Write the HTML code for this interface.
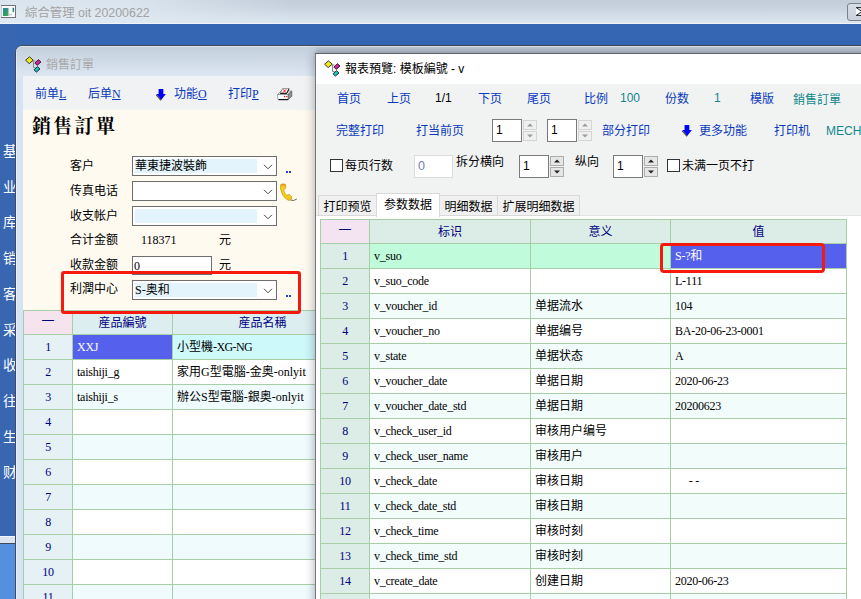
<!DOCTYPE html>
<html lang="zh">
<head>
<meta charset="utf-8">
<title>綜合管理 oit 20200622</title>
<style>
*{box-sizing:border-box;margin:0;padding:0}
html,body{width:861px;height:599px;overflow:hidden;background:#3667b3}
body{position:relative;font-family:"Liberation Sans","Noto Sans CJK SC",sans-serif;font-size:12px;color:#000}
.a{position:absolute;white-space:nowrap;line-height:1}
.sf{font-family:"Liberation Serif","Noto Sans CJK SC",serif}
.blue{color:#0a38bd}
.teal{color:#11868c}
.navy{color:#00007e}
#mt{left:0;top:0;width:861px;height:24px;background:linear-gradient(180deg,#dae4ee 0%,#dde7f0 50%,#e0e9f2 100%)}
#mtr{left:130px;top:0;width:731px;height:24px;background:linear-gradient(180deg,#c3cdda 0%,#c9d3df 35%,#d6e1ec 75%,#dbe6f0 100%);-webkit-mask-image:linear-gradient(90deg,transparent,#000 22%);mask-image:linear-gradient(90deg,transparent,#000 22%)}
#band{left:0;top:24px;width:861px;height:22px;background:#3566b3}
#side{left:0;top:24px;width:16px;height:575px;background:#3866b1}
#side2{left:0;top:536px;width:15px;height:8px;background:#d9e4f0;border-top:1px solid #f2f6fa;border-bottom:1px solid #3f4a5a}
#side3{left:0;top:544px;width:15px;height:55px;background:#5590e0}
.sc{left:3px;color:#fff;font-size:14px}
#bw{left:15px;top:45px;width:420px;height:560px;background:#d6e3f3;border:1px solid #414b5b;border-radius:7px 0 0 0}
#bwt{left:16px;top:46px;width:845px;height:31px;background:linear-gradient(180deg,#c4cfdc 0%,#dce7f3 100%);border-radius:6px 0 0 0}
#btb{left:23px;top:76px;width:293px;height:34px;background:#f0f2f3}
#bct{left:23px;top:110px;width:293px;height:489px;background:#fffaf0}
.lbl{left:70px;font-size:12px}
.combo{left:132px;width:145px;height:20px;background:#fff;border:1px solid #6e6e6e}
.combo .fill{position:absolute;left:2px;top:2px;width:122px;height:14px;background:#e4f4fc}
.combo .tx{position:absolute;left:2px;top:3px;font-size:12px;line-height:1;white-space:nowrap}
.combo svg{position:absolute;right:3px;top:7px}
.cell{position:absolute;border-right:1px solid #a6cfa6;border-bottom:1px solid #a6cfa6;font-size:12px;line-height:1;white-space:nowrap;overflow:hidden}
.cell.sf{letter-spacing:-0.25px}
.up{letter-spacing:-0.6px}
.num{text-align:center;color:#00007e;background:#e5f1f5;letter-spacing:0}
.hd{text-align:center;color:#00007e;background:#ddeef1}
#fwb{left:311px;top:46px;width:550px;height:7px;background:linear-gradient(180deg,rgba(70,80,95,.08),rgba(70,80,95,.32))}
#fwl{left:315px;top:53px;width:1px;height:546px;background:#73777d}
#fwline{left:316px;top:45px;width:545px;height:1px;background:#3e4756}
#fwt{left:316px;top:54px;width:545px;height:30px;background:#fff}
#ftb{left:316px;top:84px;width:545px;height:132px;background:#f1f3f3}
#fgrid{left:316px;top:216px;width:545px;height:383px;background:#fff}
.spin{height:23px;width:30px;background:#fff;border:1px solid #7a7a7a;font-size:12px}
.spin span{position:absolute;left:3px;top:4px;line-height:1}
.sb{width:14px;height:10px;background:#f0f0f0;border:1px solid #d4d4d4}
.sbd{border-color:#adadad;background:#e6e6e6}
.cb{width:13px;height:13px;background:#fff;border:1px solid #333}
.tab{height:21px;border:1px solid #d9d9d9;background:#f0f0f0;font-size:12px;text-align:center}
</style>
</head>
<body>
<div class="a" id="mt"></div><div class="a" id="mtr"></div><div class="a" id="band"></div>
<div class="a" id="side"></div><div class="a" id="side2"></div><div class="a" id="side3"></div>
<svg class="a" style="left:1px;top:5px" width="15" height="13" viewBox="0 0 15 13">
<defs><linearGradient id="ig" x1="0" y1="0" x2="1" y2="1"><stop offset="0" stop-color="#2f7fb0"/><stop offset=".5" stop-color="#2f9a6a"/><stop offset="1" stop-color="#46a85a"/></linearGradient>
<linearGradient id="ig2" x1="0" y1="0" x2="0" y2="1"><stop offset="0" stop-color="#1c55b8"/><stop offset="1" stop-color="#3aa45a"/></linearGradient></defs>
<rect x="0.5" y="0.5" width="14" height="12" fill="#fbfbfb" stroke="#6e737b"/>
<path d="M0.5 12 V1" stroke="#c9ccd2"/>
<rect x="2" y="3" width="5.5" height="8" fill="url(#ig)"/>
<rect x="11.6" y="2.8" width="1.5" height="4.3" fill="url(#ig2)"/>
<rect x="8" y="8.8" width="2.7" height="1.6" fill="#c4c6c8"/>
</svg>
<div class="a" style="left:0;top:23px;width:861px;height:1px;background:#f0f4f8"></div>
<div class="a" style="left:25px;top:7px;font-size:12.4px;color:#a2a2a2">綜合管理 oit 20200622</div>
<div class="a" style="left:847px;top:3px;width:20px;height:18px;border:1px solid #7a818b;border-radius:3px;background:linear-gradient(180deg,#d6dde6,#c9d1dc)"></div>
<svg class="a" style="left:855px;top:7px" width="8" height="9" viewBox="0 0 8 9"><path d="M1 0.5 L7 4.5 L1 8.5" fill="#fff" stroke="#333" stroke-width="1"/><path d="M1 0.5 L8 0.5 M1 8.5 L8 8.5" stroke="#333"/></svg>
<div class="a sc" style="top:144.0px">基</div>
<div class="a sc" style="top:179.7px">业</div>
<div class="a sc" style="top:215.4px">库</div>
<div class="a sc" style="top:251.1px">销</div>
<div class="a sc" style="top:286.8px">客</div>
<div class="a sc" style="top:322.5px">采</div>
<div class="a sc" style="top:358.2px">收</div>
<div class="a sc" style="top:393.9px">往</div>
<div class="a sc" style="top:429.6px">生</div>
<div class="a sc" style="top:465.3px">财</div>
<div class="a" id="bw"></div><div class="a" id="bwt"></div><div class="a" id="btb"></div><div class="a" id="bct"></div>
<div class="a" style="left:16px;top:52px;width:1px;height:547px;background:rgba(255,255,255,.5)"></div>
<svg class="a" style="left:25px;top:56px" width="17" height="17" viewBox="0 0 17 17">
<path d="M7.5 5 H10.5 M8.5 5 V11.5 H10.5" fill="none" stroke="#8a8a8a" stroke-width="1"/>
<path d="M4.5 0.8 L8.2 4.2 L4.2 7.6 L0.6 4.2 Z" fill="#f2ea17" stroke="#222" stroke-width="0.9"/>
<path d="M13.5 3.6 L16 6 L12.2 9.4 L9.8 7 Z" fill="#d81b9a" stroke="#222" stroke-width="0.9"/>
<path d="M12.6 10.6 L15 13 L11.4 16.2 L9 13.8 Z" fill="#19c2c2" stroke="#222" stroke-width="0.9"/>
</svg>
<div class="a" style="left:46px;top:59px;font-size:12px;color:#a8a8a8">銷售訂單</div>
<div class="a blue" style="left:35px;top:88px">前单<u class="sf">L</u></div>
<div class="a blue" style="left:88px;top:88px">后单<u class="sf">N</u></div>
<svg class="a" style="left:156px;top:89px" width="11" height="12" viewBox="0 0 11 12"><path d="M0.2 5.8 L5 11.3" stroke="#5a5526" stroke-width="1.2" fill="none"/><path d="M2.6 0 H7.3 V5 H9.8 L5.2 11 L0.4 5 H2.6 Z" fill="#0000fe"/></svg>
<div class="a blue" style="left:174px;top:88px">功能<u class="sf">O</u></div>
<div class="a blue" style="left:228px;top:88px">打印<u class="sf">P</u></div>
<svg class="a" style="left:277px;top:88px" width="16" height="13" viewBox="0 0 16 13">
<path d="M0.6 6.5 L4 3 L14.6 3 L11 6.5 Z" fill="#f1f1f1" stroke="#777" stroke-width=".7"/>
<path d="M11 6.5 L14.8 3.2 L14.8 8.3 L11 11.8 Z" fill="#8f8f96" stroke="#444" stroke-width=".6"/>
<path d="M0.6 6.5 H11 V11.5 H1.6 Q0.6 11.5 0.6 10.5 Z" fill="#fbfbfb" stroke="#777" stroke-width=".6"/>
<path d="M1.5 11.6 H11" stroke="#111" stroke-width="1.2"/>
<path d="M5.5 0.6 H12 L9.8 5.2 H3.2 Z" fill="#fff" stroke="#555" stroke-width=".6"/>
<path d="M3.2 5.4 H9.8 L12 0.8" stroke="#111" fill="none" stroke-width="1"/>
<path d="M6 1.2 L9 4.6 M9.5 1.2 L5.5 4.8" stroke="#e11" stroke-width=".9"/>
<rect x="7" y="8" width="1.2" height="1.2" fill="#e11"/><rect x="9.2" y="8" width="1.2" height="1.2" fill="#e11"/>
</svg>
<div class="a" style="left:32px;top:117px;font-family:'Liberation Serif','Noto Serif CJK SC',serif;font-weight:bold;font-size:19px;letter-spacing:2.3px">銷售訂單</div>
<div class="a lbl" style="top:160px">客户</div>
<div class="a lbl" style="top:185px">传真电话</div>
<div class="a lbl" style="top:210px">收支帐户</div>
<div class="a lbl" style="top:234px">合计金额</div>
<div class="a lbl" style="top:259px">收款金额</div>
<div class="a lbl" style="top:283px">利潤中心</div>
<div class="a combo" style="top:156px"><div class="fill"></div><div class="tx">華東捷波裝飾</div><svg width="10" height="6" viewBox="0 0 10 6"><path d="M1 0.8 L5 4.8 L9 0.8" fill="none" stroke="#4a4a4a" stroke-width="1"/></svg></div>
<div class="a combo" style="top:181px"><svg width="10" height="6" viewBox="0 0 10 6"><path d="M1 0.8 L5 4.8 L9 0.8" fill="none" stroke="#4a4a4a" stroke-width="1"/></svg></div>
<div class="a combo" style="top:206px"><div class="fill"></div><svg width="10" height="6" viewBox="0 0 10 6"><path d="M1 0.8 L5 4.8 L9 0.8" fill="none" stroke="#4a4a4a" stroke-width="1"/></svg></div>
<div class="a sf" style="left:141px;top:234px">118371</div>
<div class="a" style="left:219px;top:234px">元</div>
<div class="a" style="left:132px;top:256px;width:80px;height:19px;background:#fff;border:1px solid #6e6e6e"></div>
<div class="a sf" style="left:134px;top:260px">0</div>
<div class="a" style="left:219px;top:259px">元</div>
<div class="a combo" style="top:280px"><div class="fill"></div><div class="tx"><span class="sf">S-</span>奥和</div><svg width="10" height="6" viewBox="0 0 10 6"><path d="M1 0.8 L5 4.8 L9 0.8" fill="none" stroke="#4a4a4a" stroke-width="1"/></svg></div>
<div class="a" style="left:286px;top:171px;width:2px;height:2px;background:#2a3fd8"></div><div class="a" style="left:289px;top:171px;width:2px;height:2px;background:#2a3fd8"></div>
<div class="a" style="left:286px;top:295px;width:2px;height:2px;background:#2a3fd8"></div><div class="a" style="left:289px;top:295px;width:2px;height:2px;background:#2a3fd8"></div>
<svg class="a" style="left:279px;top:183px" width="20" height="20" viewBox="0 0 20 20">
<defs><linearGradient id="pg" x1="0" y1="0" x2="0" y2="1"><stop offset="0" stop-color="#f59a1a"/><stop offset=".25" stop-color="#f8d61c"/><stop offset="1" stop-color="#f3c614"/></linearGradient></defs>
<path d="M11.5 17 Q14.5 18.6 17.8 16" fill="none" stroke="#555" stroke-width="0.9"/>
<path d="M1.5 2.5 Q1.5 1 3 1 L5.5 1 Q7 1.2 6.8 3 L6.5 5.5 Q5 6 4.5 7 Q5.5 10.5 8 12.5 Q9 11.5 10.5 11.5 L12.5 13.5 Q13.2 15 12 16.5 Q10.5 18 8.5 17 Q3 13.5 1.5 6 Z" fill="url(#pg)" stroke="#b88a10" stroke-width="0.6"/>
</svg>
<div class="a" style="left:23px;top:310px;width:293px;height:1px;background:#a6cfa6"></div>
<div class="a" style="left:23px;top:310px;width:1px;height:289px;background:#a6cfa6"></div>
<div class="cell hd" style="left:24px;top:311px;width:49px;height:24px;padding-top:6px;background:#f5e4ee;"><span style="position:relative;top:-3px">—</span></div>
<div class="cell hd" style="left:73px;top:311px;width:100px;height:24px;padding-top:6px;">産品編號</div>
<div class="cell hd" style="left:173px;top:311px;width:180px;height:24px;padding-top:6px;">産品名稱</div>
<div class="cell num sf" style="left:24px;top:335px;width:49px;height:25px;padding-top:6px;">1</div>
<div class="cell sf" style="left:73px;top:335px;width:100px;height:25px;padding-top:6px;padding-left:4px;background:#5560ec;color:#fff;">XXJ</div>
<div class="cell " style="left:173px;top:335px;width:180px;height:25px;padding-top:6px;padding-left:4px;background:#cdf9fb;">小型機<span class="sf up">-XG-NG</span></div>
<div class="cell num sf" style="left:24px;top:360px;width:49px;height:25px;padding-top:6px;">2</div>
<div class="cell sf" style="left:73px;top:360px;width:100px;height:25px;padding-top:6px;padding-left:4px;background:#fff;">taishiji_g</div>
<div class="cell " style="left:173px;top:360px;width:180px;height:25px;padding-top:6px;padding-left:4px;background:#fff;">家用<span class="sf">G</span>型電腦<span class="sf">-</span>金奥<span class="sf">-onlyit</span></div>
<div class="cell num sf" style="left:24px;top:385px;width:49px;height:25px;padding-top:6px;">3</div>
<div class="cell sf" style="left:73px;top:385px;width:100px;height:25px;padding-top:6px;padding-left:4px;background:#f0fbfd;">taishiji_s</div>
<div class="cell " style="left:173px;top:385px;width:180px;height:25px;padding-top:6px;padding-left:4px;background:#f0fbfd;">辦公<span class="sf">S</span>型電腦<span class="sf">-</span>銀奥<span class="sf">-onlyit</span></div>
<div class="cell num sf" style="left:24px;top:410px;width:49px;height:25px;padding-top:6px;">4</div>
<div class="cell sf" style="left:73px;top:410px;width:100px;height:25px;padding-top:6px;padding-left:4px;background:#fff;"></div>
<div class="cell " style="left:173px;top:410px;width:180px;height:25px;padding-top:6px;padding-left:4px;background:#fff;"></div>
<div class="cell num sf" style="left:24px;top:435px;width:49px;height:25px;padding-top:6px;">5</div>
<div class="cell sf" style="left:73px;top:435px;width:100px;height:25px;padding-top:6px;padding-left:4px;background:#f0fbfd;"></div>
<div class="cell " style="left:173px;top:435px;width:180px;height:25px;padding-top:6px;padding-left:4px;background:#f0fbfd;"></div>
<div class="cell num sf" style="left:24px;top:460px;width:49px;height:25px;padding-top:6px;">6</div>
<div class="cell sf" style="left:73px;top:460px;width:100px;height:25px;padding-top:6px;padding-left:4px;background:#fff;"></div>
<div class="cell " style="left:173px;top:460px;width:180px;height:25px;padding-top:6px;padding-left:4px;background:#fff;"></div>
<div class="cell num sf" style="left:24px;top:485px;width:49px;height:25px;padding-top:6px;">7</div>
<div class="cell sf" style="left:73px;top:485px;width:100px;height:25px;padding-top:6px;padding-left:4px;background:#f0fbfd;"></div>
<div class="cell " style="left:173px;top:485px;width:180px;height:25px;padding-top:6px;padding-left:4px;background:#f0fbfd;"></div>
<div class="cell num sf" style="left:24px;top:510px;width:49px;height:25px;padding-top:6px;">8</div>
<div class="cell sf" style="left:73px;top:510px;width:100px;height:25px;padding-top:6px;padding-left:4px;background:#fff;"></div>
<div class="cell " style="left:173px;top:510px;width:180px;height:25px;padding-top:6px;padding-left:4px;background:#fff;"></div>
<div class="cell num sf" style="left:24px;top:535px;width:49px;height:25px;padding-top:6px;">9</div>
<div class="cell sf" style="left:73px;top:535px;width:100px;height:25px;padding-top:6px;padding-left:4px;background:#f0fbfd;"></div>
<div class="cell " style="left:173px;top:535px;width:180px;height:25px;padding-top:6px;padding-left:4px;background:#f0fbfd;"></div>
<div class="cell num sf" style="left:24px;top:560px;width:49px;height:25px;padding-top:6px;">10</div>
<div class="cell sf" style="left:73px;top:560px;width:100px;height:25px;padding-top:6px;padding-left:4px;background:#fff;"></div>
<div class="cell " style="left:173px;top:560px;width:180px;height:25px;padding-top:6px;padding-left:4px;background:#fff;"></div>
<div class="cell num sf" style="left:24px;top:585px;width:49px;height:25px;padding-top:6px;">11</div>
<div class="cell sf" style="left:73px;top:585px;width:100px;height:25px;padding-top:6px;padding-left:4px;background:#f0fbfd;"></div>
<div class="cell " style="left:173px;top:585px;width:180px;height:25px;padding-top:6px;padding-left:4px;background:#f0fbfd;"></div>
<div class="a" style="left:61px;top:271px;width:240px;height:43px;border:3px solid #f5190f;border-radius:3px"></div>
<div class="a" id="fwline"></div>
<div class="a" style="left:22px;top:46px;width:839px;height:1px;background:rgba(255,255,255,.45)"></div>
<div class="a" style="left:315px;top:53px;width:560px;height:560px;box-shadow:0 0 9px 1px rgba(40,45,55,.34)"></div>
<div class="a" style="left:316px;top:47px;width:545px;height:6px;background:linear-gradient(180deg,rgba(50,60,75,.02),rgba(50,60,75,.12))"></div>
<div class="a" id="fwt"></div><div class="a" id="ftb"></div><div class="a" id="fgrid"></div><div class="a" id="fwl"></div>
<div class="a" style="left:315px;top:53px;width:546px;height:1px;background:#5a626e"></div>
<div class="a" style="left:316px;top:215px;width:545px;height:1px;background:#e2e2e2"></div>
<svg class="a" style="left:324px;top:60px" width="17" height="17" viewBox="0 0 17 17">
<path d="M7.5 5 H10.5 M8.5 5 V11.5 H10.5" fill="none" stroke="#8a8a8a" stroke-width="1"/>
<path d="M4.5 0.8 L8.2 4.2 L4.2 7.6 L0.6 4.2 Z" fill="#f2ea17" stroke="#222" stroke-width="0.9"/>
<path d="M13.5 3.6 L16 6 L12.2 9.4 L9.8 7 Z" fill="#d81b9a" stroke="#222" stroke-width="0.9"/>
<path d="M12.6 10.6 L15 13 L11.4 16.2 L9 13.8 Z" fill="#19c2c2" stroke="#222" stroke-width="0.9"/>
</svg>
<div class="a" style="left:345px;top:63px;font-size:12px;color:#000">報表預覽: 模板編號 - v</div>
<div class="a blue" style="left:337px;top:93px">首页</div>
<div class="a blue" style="left:387px;top:93px">上页</div>
<div class="a " style="left:435px;top:92px">1/1</div>
<div class="a blue" style="left:478px;top:93px">下页</div>
<div class="a blue" style="left:527px;top:93px">尾页</div>
<div class="a blue" style="left:584px;top:93px">比例</div>
<div class="a teal" style="left:620px;top:92px">100</div>
<div class="a blue" style="left:665px;top:93px">份数</div>
<div class="a teal" style="left:714px;top:92px">1</div>
<div class="a blue" style="left:750px;top:93px">模版</div>
<div class="a teal" style="left:793px;top:94px">銷售訂單</div>
<div class="a blue" style="left:336px;top:125px">完整打印</div>
<div class="a blue" style="left:416px;top:125px">打当前页</div>
<div class="a blue" style="left:602px;top:125px">部分打印</div>
<div class="a blue" style="left:699px;top:125px">更多功能</div>
<div class="a blue" style="left:774px;top:125px">打印机</div>
<div class="a teal" style="left:826px;top:125px">MECH</div>
<svg class="a" style="left:682px;top:125px" width="11" height="12" viewBox="0 0 11 12"><path d="M0.2 5.8 L5 11.3" stroke="#5a5526" stroke-width="1.2" fill="none"/><path d="M2.6 0 H7.3 V5 H9.8 L5.2 11 L0.4 5 H2.6 Z" fill="#0000fe"/></svg>
<div class="a spin" style="left:492px;top:119px"><span>1</span></div><div class="a sb" style="left:523px;top:120px"><svg width="12" height="8" viewBox="0 0 12 8" style="display:block"><path d="M3 5.5 L6 2.5 L9 5.5 Z" fill="#9a9a9a"/></svg></div><div class="a sb" style="left:523px;top:131px"><svg width="12" height="8" viewBox="0 0 12 8" style="display:block"><path d="M3 2.5 L6 5.5 L9 2.5 Z" fill="#9a9a9a"/></svg></div>
<div class="a spin" style="left:547px;top:119px"><span>1</span></div><div class="a sb" style="left:578px;top:120px"><svg width="12" height="8" viewBox="0 0 12 8" style="display:block"><path d="M3 5.5 L6 2.5 L9 5.5 Z" fill="#9a9a9a"/></svg></div><div class="a sb" style="left:578px;top:131px"><svg width="12" height="8" viewBox="0 0 12 8" style="display:block"><path d="M3 2.5 L6 5.5 L9 2.5 Z" fill="#9a9a9a"/></svg></div>
<div class="a cb" style="left:330px;top:159px"></div>
<div class="a" style="left:345px;top:160px">每页行数</div>
<div class="a" style="left:414px;top:155px;width:39px;height:23px;background:#fff;border:1px solid #dcdcdc"></div>
<div class="a" style="left:418px;top:160px;font-size:12.5px;color:#6b7fb3">0</div>
<div class="a" style="left:456px;top:156px">拆分横向</div>
<div class="a spin" style="left:519px;top:155px"><span>1</span></div><div class="a sb sbd" style="left:550px;top:156px"><svg width="12" height="8" viewBox="0 0 12 8" style="display:block"><path d="M3 5.5 L6 2.5 L9 5.5 Z" fill="#222"/></svg></div><div class="a sb sbd" style="left:550px;top:167px"><svg width="12" height="8" viewBox="0 0 12 8" style="display:block"><path d="M3 2.5 L6 5.5 L9 2.5 Z" fill="#222"/></svg></div>
<div class="a" style="left:575px;top:156px">纵向</div>
<div class="a spin" style="left:613px;top:155px"><span>1</span></div><div class="a sb sbd" style="left:644px;top:156px"><svg width="12" height="8" viewBox="0 0 12 8" style="display:block"><path d="M3 5.5 L6 2.5 L9 5.5 Z" fill="#222"/></svg></div><div class="a sb sbd" style="left:644px;top:167px"><svg width="12" height="8" viewBox="0 0 12 8" style="display:block"><path d="M3 2.5 L6 5.5 L9 2.5 Z" fill="#222"/></svg></div>
<div class="a cb" style="left:667px;top:159px"></div>
<div class="a" style="left:682px;top:160px">未满一页不打</div>
<div class="a tab" style="left:318px;top:195px;width:59px;padding-top:5px">打印预览</div>
<div class="a tab" style="left:439px;top:195px;width:59px;padding-top:5px">明细数据</div>
<div class="a tab" style="left:497px;top:195px;width:83px;padding-top:5px">扩展明细数据</div>
<div class="a tab" style="left:376px;top:193px;width:64px;height:24px;background:#fff;border-bottom:none;padding-top:5px">参数数据</div>
<div class="a" style="left:320px;top:219px;width:527px;height:1px;background:#a6cfa6"></div>
<div class="a" style="left:320px;top:219px;width:1px;height:380px;background:#a6cfa6"></div>
<div class="cell hd" style="left:321px;top:220px;width:49px;height:24px;padding-top:6px;background:#f4e3f0;"><span style="position:relative;top:-3px">—</span></div>
<div class="cell hd" style="left:370px;top:220px;width:161px;height:24px;padding-top:6px;background:#dcece6;">标识</div>
<div class="cell hd" style="left:531px;top:220px;width:140px;height:24px;padding-top:6px;background:#dcece6;">意义</div>
<div class="cell hd" style="left:671px;top:220px;width:176px;height:24px;padding-top:6px;background:#dcece6;">值</div>
<div class="cell num sf" style="left:321px;top:244px;width:49px;height:25px;padding-top:6px;background:#dcece6;">1</div>
<div class="cell sf" style="left:370px;top:244px;width:161px;height:25px;padding-top:6px;padding-left:4px;background:#c0fbdc;">v_suo</div>
<div class="cell " style="left:531px;top:244px;width:140px;height:25px;padding-top:6px;padding-left:4px;background:#c0fbdc;"></div>
<div class="cell sf" style="left:671px;top:244px;width:176px;height:25px;padding-top:6px;padding-left:4px;background:#5560ec;color:#fff;"><span class="sf">S-?</span>和</div>
<div class="cell num sf" style="left:321px;top:269px;width:49px;height:25px;padding-top:6px;background:#dcece6;">2</div>
<div class="cell sf" style="left:370px;top:269px;width:161px;height:25px;padding-top:6px;padding-left:4px;background:#fff;">v_suo_code</div>
<div class="cell " style="left:531px;top:269px;width:140px;height:25px;padding-top:6px;padding-left:4px;background:#fff;"></div>
<div class="cell sf" style="left:671px;top:269px;width:176px;height:25px;padding-top:6px;padding-left:4px;background:#fff;">L-111</div>
<div class="cell num sf" style="left:321px;top:294px;width:49px;height:25px;padding-top:6px;background:#dcece6;">3</div>
<div class="cell sf" style="left:370px;top:294px;width:161px;height:25px;padding-top:6px;padding-left:4px;background:#f1fcfb;">v_voucher_id</div>
<div class="cell " style="left:531px;top:294px;width:140px;height:25px;padding-top:6px;padding-left:4px;background:#f1fcfb;">单据流水</div>
<div class="cell sf" style="left:671px;top:294px;width:176px;height:25px;padding-top:6px;padding-left:4px;background:#f1fcfb;">104</div>
<div class="cell num sf" style="left:321px;top:319px;width:49px;height:25px;padding-top:6px;background:#dcece6;">4</div>
<div class="cell sf" style="left:370px;top:319px;width:161px;height:25px;padding-top:6px;padding-left:4px;background:#fff;">v_voucher_no</div>
<div class="cell " style="left:531px;top:319px;width:140px;height:25px;padding-top:6px;padding-left:4px;background:#fff;">单据编号</div>
<div class="cell sf" style="left:671px;top:319px;width:176px;height:25px;padding-top:6px;padding-left:4px;background:#fff;">BA-20-06-23-0001</div>
<div class="cell num sf" style="left:321px;top:344px;width:49px;height:25px;padding-top:6px;background:#dcece6;">5</div>
<div class="cell sf" style="left:370px;top:344px;width:161px;height:25px;padding-top:6px;padding-left:4px;background:#f1fcfb;">v_state</div>
<div class="cell " style="left:531px;top:344px;width:140px;height:25px;padding-top:6px;padding-left:4px;background:#f1fcfb;">单据状态</div>
<div class="cell sf" style="left:671px;top:344px;width:176px;height:25px;padding-top:6px;padding-left:4px;background:#f1fcfb;">A</div>
<div class="cell num sf" style="left:321px;top:369px;width:49px;height:25px;padding-top:6px;background:#dcece6;">6</div>
<div class="cell sf" style="left:370px;top:369px;width:161px;height:25px;padding-top:6px;padding-left:4px;background:#fff;">v_voucher_date</div>
<div class="cell " style="left:531px;top:369px;width:140px;height:25px;padding-top:6px;padding-left:4px;background:#fff;">单据日期</div>
<div class="cell sf" style="left:671px;top:369px;width:176px;height:25px;padding-top:6px;padding-left:4px;background:#fff;">2020-06-23</div>
<div class="cell num sf" style="left:321px;top:394px;width:49px;height:25px;padding-top:6px;background:#dcece6;">7</div>
<div class="cell sf" style="left:370px;top:394px;width:161px;height:25px;padding-top:6px;padding-left:4px;background:#f1fcfb;">v_voucher_date_std</div>
<div class="cell " style="left:531px;top:394px;width:140px;height:25px;padding-top:6px;padding-left:4px;background:#f1fcfb;">单据日期</div>
<div class="cell sf" style="left:671px;top:394px;width:176px;height:25px;padding-top:6px;padding-left:4px;background:#f1fcfb;">20200623</div>
<div class="cell num sf" style="left:321px;top:419px;width:49px;height:25px;padding-top:6px;background:#dcece6;">8</div>
<div class="cell sf" style="left:370px;top:419px;width:161px;height:25px;padding-top:6px;padding-left:4px;background:#fff;">v_check_user_id</div>
<div class="cell " style="left:531px;top:419px;width:140px;height:25px;padding-top:6px;padding-left:4px;background:#fff;">审核用户编号</div>
<div class="cell sf" style="left:671px;top:419px;width:176px;height:25px;padding-top:6px;padding-left:4px;background:#fff;"></div>
<div class="cell num sf" style="left:321px;top:444px;width:49px;height:25px;padding-top:6px;background:#dcece6;">9</div>
<div class="cell sf" style="left:370px;top:444px;width:161px;height:25px;padding-top:6px;padding-left:4px;background:#f1fcfb;">v_check_user_name</div>
<div class="cell " style="left:531px;top:444px;width:140px;height:25px;padding-top:6px;padding-left:4px;background:#f1fcfb;">审核用户</div>
<div class="cell sf" style="left:671px;top:444px;width:176px;height:25px;padding-top:6px;padding-left:4px;background:#f1fcfb;"></div>
<div class="cell num sf" style="left:321px;top:469px;width:49px;height:25px;padding-top:6px;background:#dcece6;">10</div>
<div class="cell sf" style="left:370px;top:469px;width:161px;height:25px;padding-top:6px;padding-left:4px;background:#fff;">v_check_date</div>
<div class="cell " style="left:531px;top:469px;width:140px;height:25px;padding-top:6px;padding-left:4px;background:#fff;">审核日期</div>
<div class="cell sf" style="left:671px;top:469px;width:176px;height:25px;padding-top:6px;padding-left:4px;background:#fff;">&nbsp;&nbsp;&nbsp;&nbsp;&nbsp;- -</div>
<div class="cell num sf" style="left:321px;top:494px;width:49px;height:25px;padding-top:6px;background:#dcece6;">11</div>
<div class="cell sf" style="left:370px;top:494px;width:161px;height:25px;padding-top:6px;padding-left:4px;background:#f1fcfb;">v_check_date_std</div>
<div class="cell " style="left:531px;top:494px;width:140px;height:25px;padding-top:6px;padding-left:4px;background:#f1fcfb;">审核日期</div>
<div class="cell sf" style="left:671px;top:494px;width:176px;height:25px;padding-top:6px;padding-left:4px;background:#f1fcfb;"></div>
<div class="cell num sf" style="left:321px;top:519px;width:49px;height:25px;padding-top:6px;background:#dcece6;">12</div>
<div class="cell sf" style="left:370px;top:519px;width:161px;height:25px;padding-top:6px;padding-left:4px;background:#fff;">v_check_time</div>
<div class="cell " style="left:531px;top:519px;width:140px;height:25px;padding-top:6px;padding-left:4px;background:#fff;">审核时刻</div>
<div class="cell sf" style="left:671px;top:519px;width:176px;height:25px;padding-top:6px;padding-left:4px;background:#fff;"></div>
<div class="cell num sf" style="left:321px;top:544px;width:49px;height:25px;padding-top:6px;background:#dcece6;">13</div>
<div class="cell sf" style="left:370px;top:544px;width:161px;height:25px;padding-top:6px;padding-left:4px;background:#f1fcfb;">v_check_time_std</div>
<div class="cell " style="left:531px;top:544px;width:140px;height:25px;padding-top:6px;padding-left:4px;background:#f1fcfb;">审核时刻</div>
<div class="cell sf" style="left:671px;top:544px;width:176px;height:25px;padding-top:6px;padding-left:4px;background:#f1fcfb;"></div>
<div class="cell num sf" style="left:321px;top:569px;width:49px;height:25px;padding-top:6px;background:#dcece6;">14</div>
<div class="cell sf" style="left:370px;top:569px;width:161px;height:25px;padding-top:6px;padding-left:4px;background:#fff;">v_create_date</div>
<div class="cell " style="left:531px;top:569px;width:140px;height:25px;padding-top:6px;padding-left:4px;background:#fff;">创建日期</div>
<div class="cell sf" style="left:671px;top:569px;width:176px;height:25px;padding-top:6px;padding-left:4px;background:#fff;">2020-06-23</div>
<div class="cell num sf" style="left:321px;top:594px;width:49px;height:25px;padding-top:6px;background:#dcece6;">15</div>
<div class="cell sf" style="left:370px;top:594px;width:161px;height:25px;padding-top:6px;padding-left:4px;background:#f1fcfb;"></div>
<div class="cell " style="left:531px;top:594px;width:140px;height:25px;padding-top:6px;padding-left:4px;background:#f1fcfb;"></div>
<div class="cell sf" style="left:671px;top:594px;width:176px;height:25px;padding-top:6px;padding-left:4px;background:#f1fcfb;"></div>
<div class="a" style="left:660px;top:243px;width:165px;height:30px;border:3px solid #f5190f;border-radius:4px"></div>
</body>
</html>
